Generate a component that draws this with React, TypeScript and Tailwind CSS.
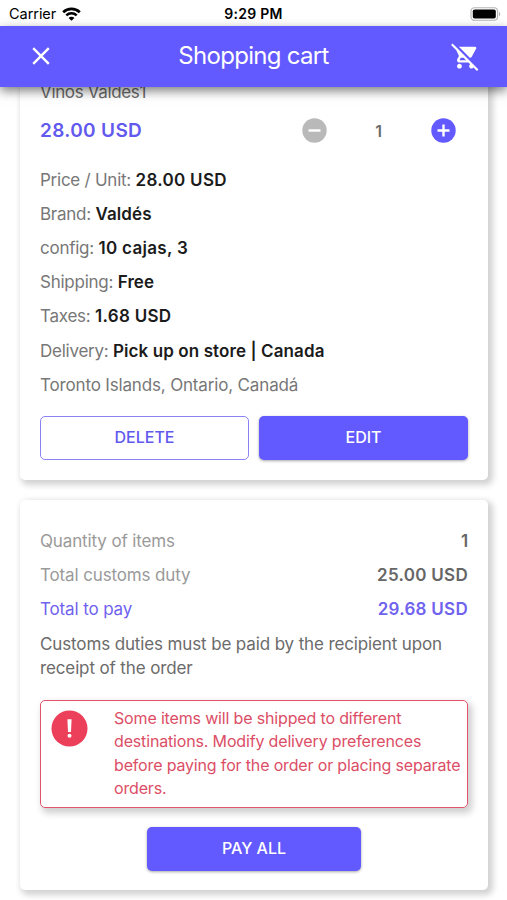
import type { ReactNode } from "react";
import { MdRemoveShoppingCart } from "react-icons/md";

const details = [
  { label: "Price / Unit:", value: "28.00 USD" },
  { label: "Brand:", value: "Valdés" },
  { label: "config:", value: "10 cajas, 3" },
  { label: "Shipping:", value: "Free" },
  { label: "Taxes:", value: "1.68 USD" },
  { label: "Delivery:", value: "Pick up on store | Canada" },
];

function StatusBar() {
  return (
    <div className="relative flex h-[25.5px] shrink-0 items-center justify-between pl-[9px] pr-[6px] pt-[2px] text-black">
      <div className="flex items-center gap-[6px]">
        <span className="text-[14.5px] leading-5 tracking-[-0.05px]">Carrier</span>
        <svg width="19" height="14" viewBox="0 0 19 14" fill="none">
          <path d="M1.2 5.2C5.8 .7 13.2 .7 17.8 5.2" stroke="currentColor" strokeWidth="2.7" />
          <path d="M4.3 8.4C7.2 5.6 11.8 5.6 14.7 8.4" stroke="currentColor" strokeWidth="2.5" />
          <path d="M9.5 13.8 6.6 10.9C8.2 9.4 10.8 9.4 12.4 10.9Z" fill="currentColor" />
        </svg>
      </div>
      <span className="absolute left-0 w-full text-center text-[14px] font-semibold leading-5 tracking-[0.3px]">
        9:29 PM
      </span>
      <svg width="31" height="14" viewBox="0 0 31 14" fill="none">
        <rect x="1" y=".7" width="26.6" height="12.6" rx="3.5" stroke="#b5b5b5" strokeWidth="1.1" />
        <rect x="2.8" y="2.4" width="23" height="9.2" rx="1.8" fill="black" />
        <path d="M29 4.7c1.7.8 1.7 3.8 0 4.6z" fill="#b5b5b5" />
      </svg>
    </div>
  );
}

function Header() {
  return (
    <header className="relative z-10 flex h-[61px] shrink-0 items-center justify-between bg-[#6259ff] pl-[32px] pr-[27px] text-white shadow-[0_4px_10px_rgba(0,0,0,0.5)]">
      <svg width="18" height="18" viewBox="0 0 18 18" fill="none" stroke="currentColor" strokeWidth="2.4">
        <path d="m1.2 1.2 15.6 15.6M16.8 1.2 1.2 16.8" />
      </svg>
      <h1 className="absolute left-0 w-full text-center text-[24px] font-normal leading-8 tracking-[-0.7px]">
        Shopping cart
      </h1>
      <MdRemoveShoppingCart size={29} />
    </header>
  );
}

function Card({ className, children }: { className: string; children: ReactNode }) {
  return (
    <section
      className={`mx-[20px] w-[468px] rounded-[5px] bg-white px-[20px] shadow-[3px_3px_6px_2px_rgba(0,0,0,0.18)] ${className}`}
    >
      {children}
    </section>
  );
}

export default function App() {
  return (
    <div className="flex h-[900px] w-[507px] flex-col overflow-hidden bg-white font-['Inter',sans-serif] text-[17px] tracking-[-0.13px] text-[#6b6b6b]">
      <StatusBar />
      <Header />
      <main className="min-h-0 flex-1 overflow-hidden">
        <Card className="-mt-[20px] h-[413.5px] pt-[13px]">
          <p className="leading-6 tracking-[-0.35px]">Vinos Valdés1</p>
          <div className="mt-[14px] flex h-[26px] items-center justify-between pr-[12.5px]">
            <span className="mt-[2px] text-[19px] font-semibold tracking-[0.35px] text-[#6259ee]">
              28.00 USD
            </span>
            <div className="flex items-center">
              <button aria-label="Remove one">
                <svg width="25" height="25" viewBox="0 0 25 25">
                  <circle cx="12.5" cy="12.5" r="12.2" fill="#b9b9b9" />
                  <path d="M6.5 12.5h12" stroke="white" strokeWidth="2.4" />
                </svg>
              </button>
              <span className="w-[104px] text-center text-[16px] font-semibold">1</span>
              <button aria-label="Add one">
                <svg width="25" height="25" viewBox="0 0 25 25">
                  <circle cx="12.5" cy="12.5" r="12.2" fill="#6259ff" />
                  <path d="M6.5 12.5h12M12.5 6.5v12" stroke="white" strokeWidth="2.4" />
                </svg>
              </button>
            </div>
          </div>
          <div className="mt-[19px] leading-[34.2px] text-[#777]">
            {details.map(({ label, value }) => (
              <p key={label} className="tracking-[-0.25px]">
                {label}{" "}
                <span
                  className={
                    /^\d/.test(value)
                      ? "font-semibold tracking-[0.3px] text-[#1b1b1b]"
                      : "font-semibold tracking-[0.1px] text-[#1b1b1b]"
                  }
                >
                  {value}
                </span>
              </p>
            ))}
            <p className="tracking-[-0.16px]">Toronto Islands, Ontario, Canadá</p>
          </div>
          <div className="mt-[14px] flex gap-[10px] text-[16px] font-medium tracking-normal">
            <button className="h-[44px] w-[209px] rounded-[5px] border-[1.5px] border-[#8b82f7] pb-[1px] text-[#6259ee]">
              DELETE
            </button>
            <button className="h-[44px] w-[209px] rounded-[5px] bg-[#6259ff] pb-[1px] text-white shadow-[0_1px_3px_rgba(0,0,0,0.35)]">
              EDIT
            </button>
          </div>
        </Card>

        <Card className="mt-[20px] h-[390px] pt-[24px]">
          <div className="leading-[34.2px] text-[#9a9a9a]">
            <div className="flex justify-between">
              <span>Quantity of items</span>
              <span className="font-semibold text-[#666]">1</span>
            </div>
            <div className="flex justify-between">
              <span>Total customs duty</span>
              <span className="font-semibold tracking-[0.28px] text-[#666]">25.00 USD</span>
            </div>
            <div className="flex justify-between text-[#6f62ee]">
              <span>Total to pay</span>
              <span className="font-semibold tracking-[0.28px]">29.68 USD</span>
            </div>
          </div>
          <p className="mt-[5px] leading-[24.5px]">
            Customs duties must be paid by the recipient upon
            <br />
            receipt of the order
          </p>
          <div className="mt-[19px] flex h-[108px] gap-[26px] rounded-[5px] border-[1.5px] border-[#e0536b] pl-[10px] pt-[6.5px] shadow-[3px_4px_7px_1px_rgba(0,0,0,0.2)]">
            <svg className="mt-[3px] shrink-0" width="37" height="37" viewBox="0 0 37 37">
              <circle cx="18.5" cy="18.5" r="18" fill="#eb3f5a" />
              <path d="M16.4 9.3h4.2l-.6 12.6h-3z" fill="white" />
              <circle cx="18.5" cy="25.7" r="2" fill="white" />
            </svg>
            <p className="whitespace-nowrap text-[16px] leading-[23.2px] tracking-[-0.16px] text-[#dc4e66]">
              Some items will be shipped to different
              <br />
              destinations. Modify delivery preferences
              <br />
              before paying for the order or placing separate
              <br />
              orders.
            </p>
          </div>
          <button className="mx-auto mt-[19px] block h-[44px] w-[214px] rounded-[5px] bg-[#6259ff] pb-[2px] text-[16px] font-medium tracking-normal text-white shadow-[0_1px_3px_rgba(0,0,0,0.35)]">
            PAY ALL
          </button>
        </Card>
      </main>
    </div>
  );
}
